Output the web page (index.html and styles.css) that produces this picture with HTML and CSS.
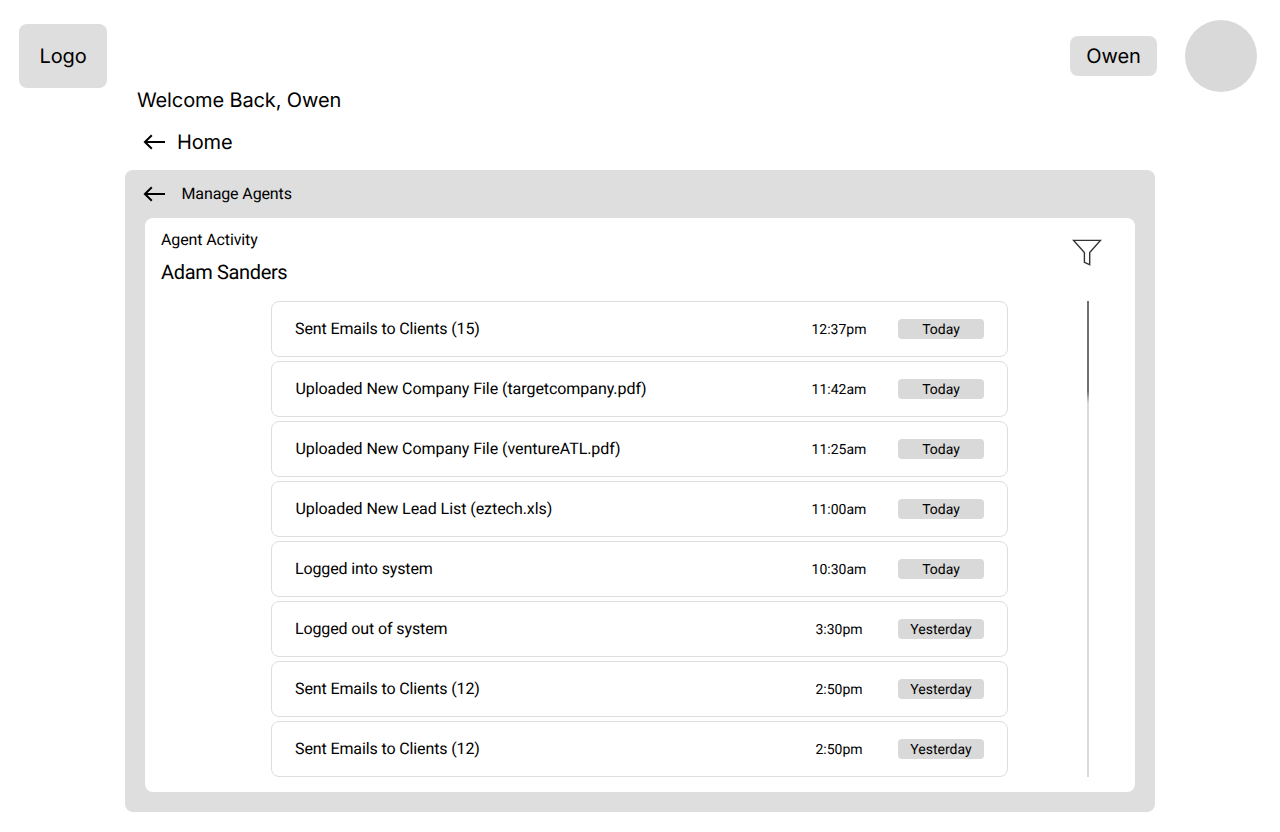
FILE: index.html
```html
<!DOCTYPE html>
<html lang="en">
<head>
<meta charset="utf-8">
<title>Agent Activity</title>
<link rel="stylesheet" href="styles.css">
</head>
<body>
<header class="topbar">
  <div class="logo">Logo</div>
  <div class="account">
    <div class="user-name">Owen</div>
    <div class="avatar"></div>
  </div>
</header>
<main class="page">
  <h1 class="welcome">Welcome Back, Owen</h1>
  <nav class="crumb">
    <svg class="arrow" width="24" height="16" viewBox="0 0 24 16"><path d="M23 8H3.1M9.8 1.2L2.9 8l6.9 6.8"/></svg>
    <span class="crumb-home">Home</span>
  </nav>
  <section class="panel">
    <div class="panel-head">
      <svg class="arrow" width="24" height="16" viewBox="0 0 24 16"><path d="M23 8H3.1M9.8 1.2L2.9 8l6.9 6.8"/></svg>
      <span class="panel-title">Manage Agents</span>
    </div>
    <div class="card">
      <div class="card-head">
        <div>
          <h2 class="card-title">Agent Activity</h2>
          <p class="agent">Adam Sanders</p>
        </div>
        <svg class="filter" width="30" height="28" viewBox="0 0 30 28"><path d="M1.6 2.4H28.4L17.7 14.5V26.6L12.4 24.4V14.5Z"/></svg>
      </div>
      <div class="card-body">
        <ul class="activity">
          <li class="row"><span class="what">Sent Emails to Clients (15)</span><span class="time">12:37pm</span><span class="day">Today</span></li>
          <li class="row"><span class="what upload">Uploaded New Company File (targetcompany.pdf)</span><span class="time">11:42am</span><span class="day">Today</span></li>
          <li class="row"><span class="what upload">Uploaded New Company File (ventureATL.pdf)</span><span class="time">11:25am</span><span class="day">Today</span></li>
          <li class="row"><span class="what upload">Uploaded New Lead List (eztech.xls)</span><span class="time">11:00am</span><span class="day">Today</span></li>
          <li class="row"><span class="what">Logged into system</span><span class="time">10:30am</span><span class="day">Today</span></li>
          <li class="row"><span class="what">Logged out of system</span><span class="time">3:30pm</span><span class="day">Yesterday</span></li>
          <li class="row"><span class="what">Sent Emails to Clients (12)</span><span class="time">2:50pm</span><span class="day">Yesterday</span></li>
          <li class="row"><span class="what">Sent Emails to Clients (12)</span><span class="time">2:50pm</span><span class="day">Yesterday</span></li>
        </ul>
        <div class="scroll-track"></div>
      </div>
    </div>
  </section>
</main>
</body>
</html>
```
FILE: styles.css
```css
* { box-sizing: border-box; }
body {
  margin: 0;
  height: 832px;
  overflow: hidden;
  background: #fff;
  color: #000;
  font: 400 16px/24px Roboto, sans-serif;
  letter-spacing: -0.12px;
  text-rendering: geometricPrecision;
}
h1, h2, p, ul { margin: 0; padding: 0; font-weight: 400; }
svg { display: block; fill: none; stroke: #000; }

.topbar {
  display: flex;
  justify-content: space-between;
  height: 88px;
  padding: 20px 23px 0 19px;
  font: 400 20px/24px Inter, sans-serif;
}
.logo {
  display: flex;
  align-items: center;
  justify-content: center;
  width: 88px;
  height: 64px;
  margin-top: 4px;
  border-radius: 8px;
  background: #dedede;
}
.account { display: flex; align-items: center; gap: 28px; height: 72px; }
.user-name {
  width: 87px;
  padding: 8px 0;
  border-radius: 8px;
  background: #dedede;
  text-align: center;
}
.avatar { width: 72px; height: 72px; border-radius: 50%; background: #d9d9d9; }

.page { width: 1030px; margin: 0 auto; }
.welcome { padding-left: 12px; font: 400 20px/24px Inter, sans-serif; }
.crumb {
  display: flex;
  align-items: center;
  gap: 11px;
  height: 24px;
  margin: 18px 0 16px;
  padding-left: 17px;
}
.crumb-home { font: 400 20px/24px Inter, sans-serif; }
.arrow { stroke-width: 2; }

.panel {
  height: 642px;
  padding: 0 20px 20px;
  border-radius: 8px;
  background: #dedede;
}
.panel-head {
  display: flex;
  align-items: center;
  gap: 15.5px;
  height: 48px;
  margin-left: -3px;
}
.card { height: 574px; padding: 10px 16px 0; border-radius: 8px; background: #fff; }
.card-head { display: flex; justify-content: space-between; height: 73px; }
.card-title { font-size: 16px; line-height: 24px; }
.agent { margin-top: 8px; font-size: 20px; line-height: 24px; letter-spacing: -0.35px; }
.filter { margin: 10px 17px 0 0; stroke: #333; stroke-width: 1.4; }

.card-body { display: flex; justify-content: space-between; padding: 0 30px 0 110px; }
.activity { display: grid; gap: 4px; width: 737px; list-style: none; }
.row {
  display: grid;
  grid-template-columns: 1fr 86px 86px;
  column-gap: 16px;
  align-items: center;
  height: 56px;
  padding: 0 23px;
  border: 1px solid #dedede;
  border-radius: 8px;
}
.upload { padding-left: 0.4px; letter-spacing: -0.06px; }
.time, .day {
  height: 20px;
  padding-top: 1px;
  font-size: 14px;
  line-height: 20px;
  letter-spacing: 0;
  text-align: center;
}
.day { border-radius: 4px; background: #d9d9d9; }
.scroll-track {
  width: 2px;
  height: 476px;
  background: linear-gradient(#707070 0, #707070 90px, #d9d9d9 102px);
}
```
